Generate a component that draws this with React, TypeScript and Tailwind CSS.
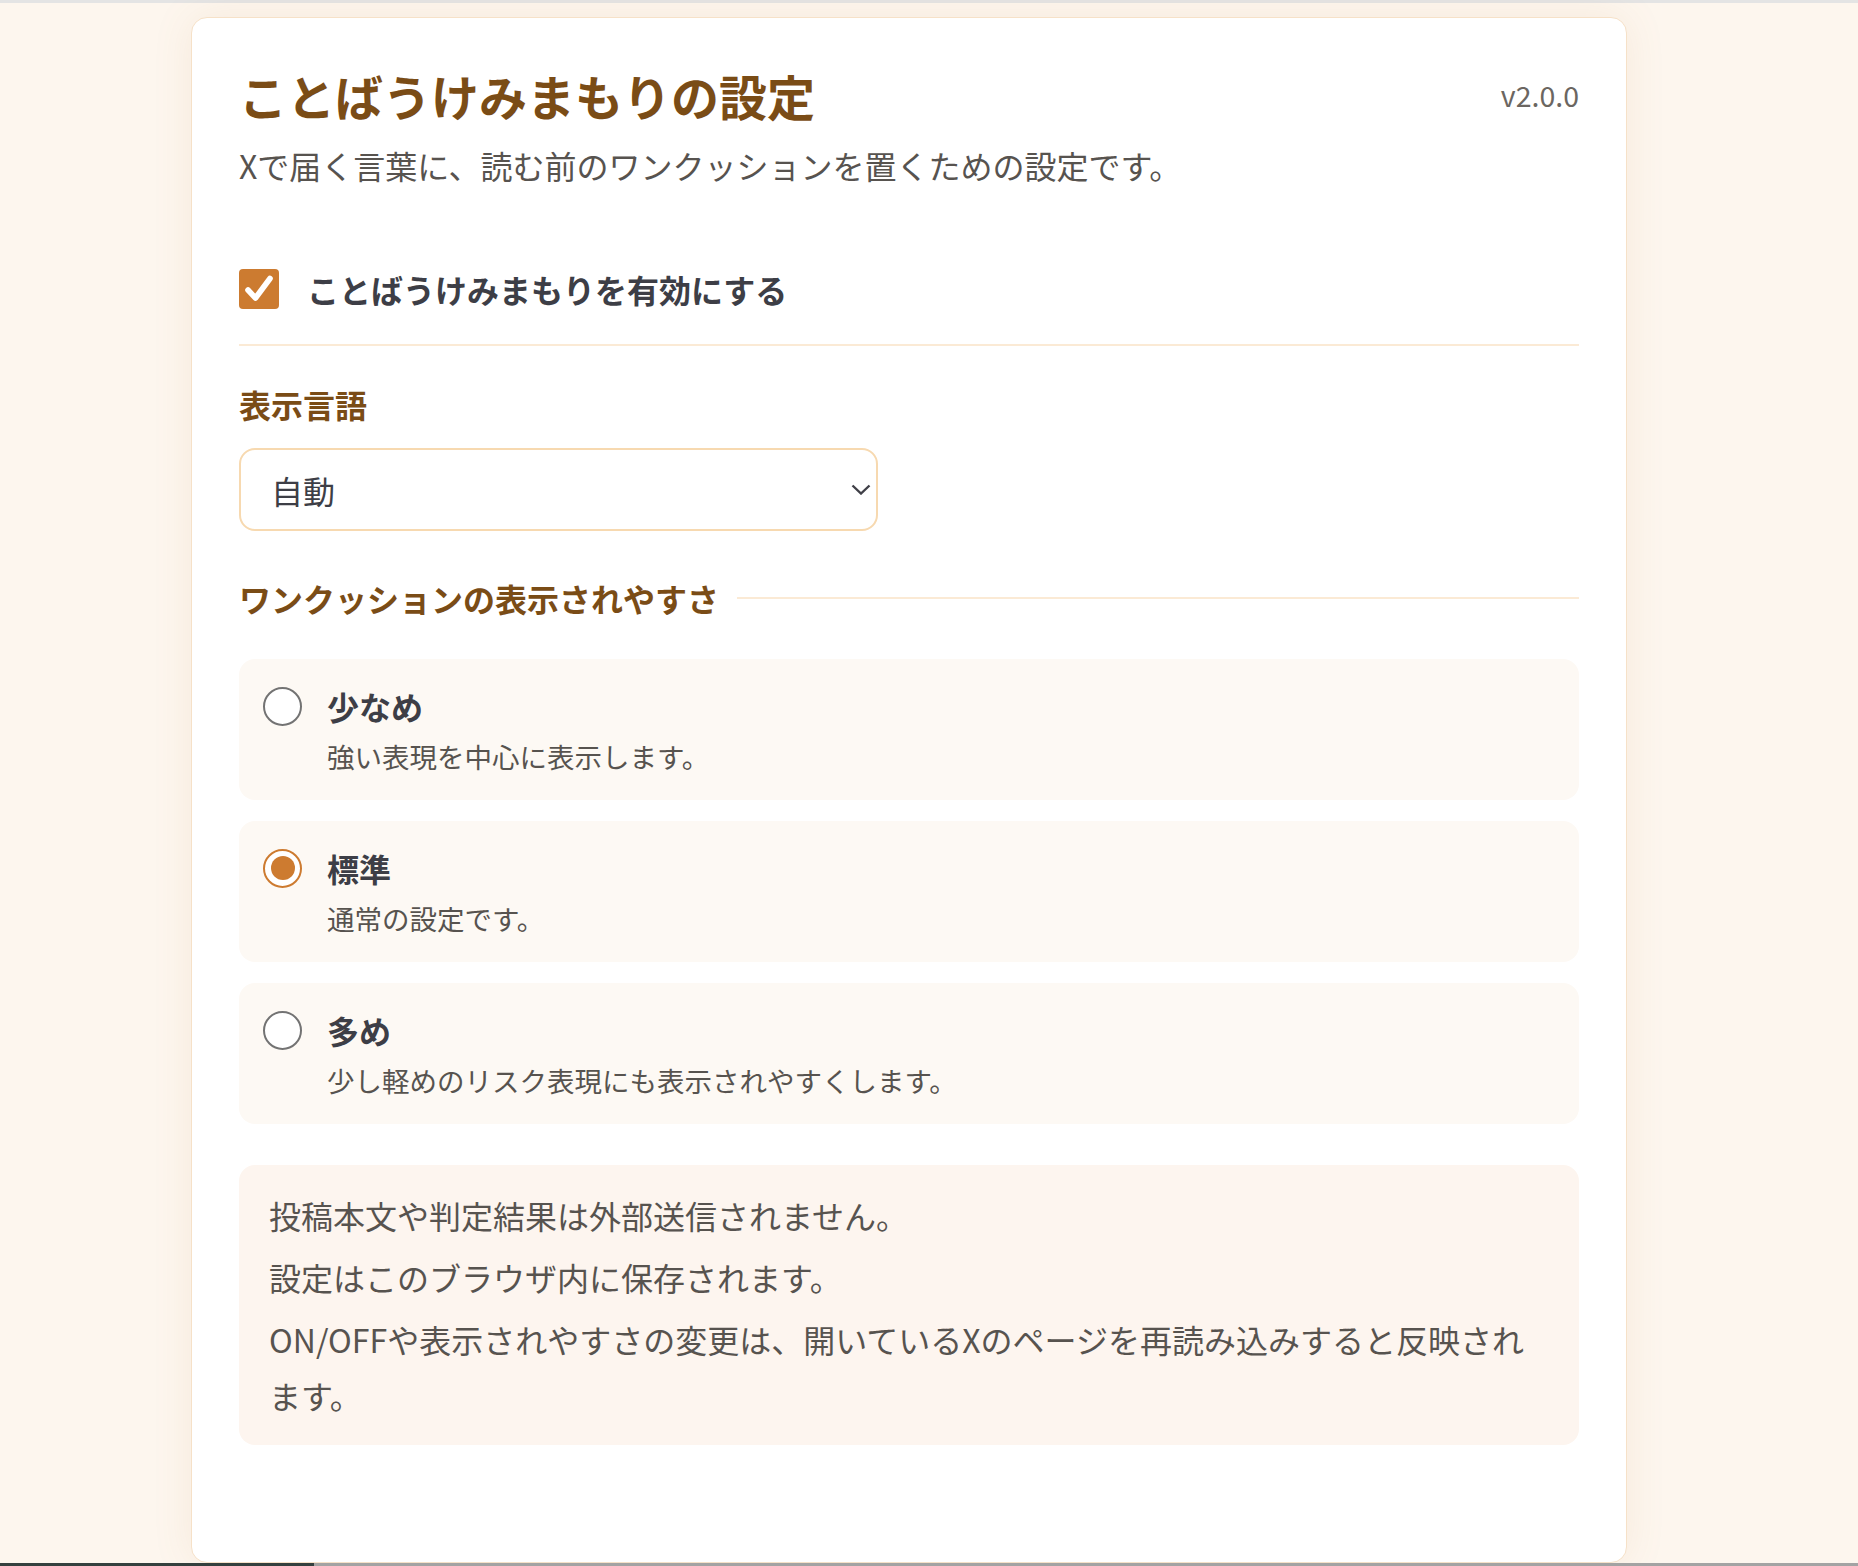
import React, { useState } from "react";

const FONT = { fontFamily: '"Noto Sans CJK JP", "Noto Sans", sans-serif' };

type Level = "low" | "standard" | "high";

const OPTIONS: { id: Level; title: string; desc: string }[] = [
  { id: "low", title: "少なめ", desc: "強い表現を中心に表示します。" },
  { id: "standard", title: "標準", desc: "通常の設定です。" },
  { id: "high", title: "多め", desc: "少し軽めのリスク表現にも表示されやすくします。" },
];

function Radio({ checked }: { checked: boolean }) {
  return checked ? (
    <span className="flex h-[39px] w-[39px] shrink-0 items-center justify-center rounded-full border-[2.5px] border-[#cd7b30] bg-white">
      <span className="h-[24px] w-[24px] rounded-full bg-[#cd7b30]" />
    </span>
  ) : (
    <span className="block h-[39px] w-[39px] shrink-0 rounded-full border-[2.5px] border-[#737373] bg-white" />
  );
}

export default function App() {
  const [enabled, setEnabled] = useState(true);
  const [level, setLevel] = useState<Level>("standard");

  return (
    <div className="flex min-h-[1566px] w-full flex-col bg-[#fdf6ee]" style={FONT}>
      <div className="h-[3px] w-full bg-[#e4e4e4]" />
      <div className="flex flex-1 pl-[191px] pr-[231px] pt-[14px]">
        <div className="flex w-[1436px] flex-col rounded-[16px] border border-[#f6e1c8] bg-white px-[47px] pb-[116px] pt-[48px] shadow-[0_0_40px_rgba(190,130,70,0.10)]">
          {/* Header */}
          <div className="flex items-center justify-between">
            <h1 className="text-[48px] font-bold leading-[58px] text-[#7a4c16]">
              ことばうけみまもりの設定
            </h1>
            <span className="text-[28.5px] leading-[34px] text-[#6b6661]">v2.0.0</span>
          </div>
          <p className="mt-[19px] text-[32px] leading-[44px] text-[#57534f]">
            Xで届く言葉に、読む前のワンクッションを置くための設定です。
          </p>

          {/* Enable checkbox */}
          <label
            className="mt-[82px] flex cursor-pointer items-center gap-[28px]"
            onClick={() => setEnabled((v) => !v)}
          >
            <span
              className={
                enabled
                  ? "flex h-[40px] w-[40px] items-center justify-center rounded-[4px] bg-[#cc7b30]"
                  : "flex h-[40px] w-[40px] items-center justify-center rounded-[4px] border-2 border-[#737373] bg-white"
              }
            >
              {enabled && (
                <svg width="40" height="40" viewBox="0 0 40 40">
                  <path
                    d="M9 21 L16.5 29 L31 9.5"
                    fill="none"
                    stroke="#ffffff"
                    strokeWidth="5.6"
                    strokeLinecap="round"
                    strokeLinejoin="round"
                  />
                </svg>
              )}
            </span>
            <span className="text-[32px] font-bold leading-[40px] text-[#3d3e46]">
              ことばうけみまもりを有効にする
            </span>
          </label>

          <div className="mt-[35px] h-[2px] w-full bg-[#fbead5]" />

          {/* Language */}
          <h2 className="mt-[36px] text-[32px] font-bold leading-[44px] text-[#7a4c16]">表示言語</h2>
          <div className="mt-[22px] flex h-[83px] w-[639px] items-center justify-between rounded-[16px] border-2 border-[#f7d9b0] bg-white pl-[30px] pr-[5px]">
            <span className="text-[32px] leading-[44px] text-[#3d3e46]">自動</span>
            <svg width="20" height="11" viewBox="0 0 20 11">
              <polyline
                points="1.5,1.5 10,9.5 18.5,1.5"
                fill="none"
                stroke="#404048"
                strokeWidth="2.4"
              />
            </svg>
          </div>

          {/* Sensitivity */}
          <div className="mt-[45px] flex items-center gap-[18px]">
            <h2 className="text-[32px] font-bold leading-[44px] text-[#7a4c16]">
              ワンクッションの表示されやすさ
            </h2>
            <div className="h-[2px] flex-1 bg-[#fbead5]" />
          </div>

          <div className="mt-[39px] flex flex-col gap-[21px]">
            {OPTIONS.map((o) => (
              <div
                key={o.id}
                className="flex cursor-pointer items-start gap-[25px] rounded-[16px] bg-[#fdf9f4] px-[24px] pb-[24px] pt-[26px]"
                onClick={() => setLevel(o.id)}
              >
                <div className="flex h-[42px] items-center">
                  <Radio checked={level === o.id} />
                </div>
                <div className="flex flex-col">
                  <span className="text-[32px] font-bold leading-[42px] text-[#3d3e46]">{o.title}</span>
                  <span className="mt-[9px] text-[27.5px] leading-[40px] text-[#57534f]">{o.desc}</span>
                </div>
              </div>
            ))}
          </div>

          {/* Info */}
          <div className="mt-[41px] flex flex-col gap-[6px] rounded-[16px] bg-[#fdf5ef] pb-[22px] pl-[30px] pr-[40px] pt-[22px] text-[32px] leading-[56px] text-[#57534f]">
            <p>投稿本文や判定結果は外部送信されません。</p>
            <p>設定はこのブラウザ内に保存されます。</p>
            <p>ON/OFFや表示されやすさの変更は、開いているXのページを再読み込みすると反映されます。</p>
          </div>
        </div>
      </div>
      <div className="flex h-[3px] w-full">
        <div className="w-[314px] bg-[#34403e]" />
        <div className="flex-1 bg-[#a3a3a3]" />
      </div>
    </div>
  );
}
